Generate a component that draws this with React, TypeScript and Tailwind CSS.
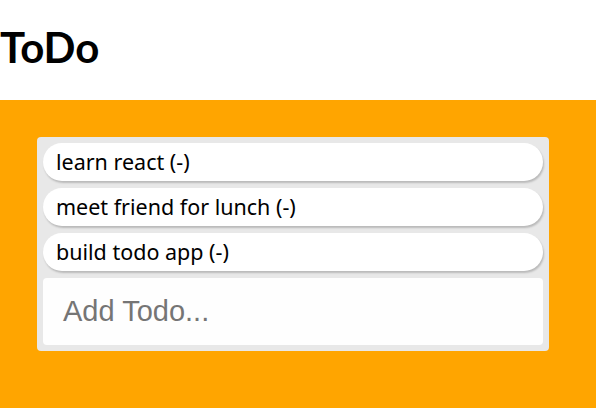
import React from "react";

const todos = ["learn react", "meet friend for lunch", "build todo app"];

export default function App() {
  return (
    <div className="w-[596px] h-[408px] flex flex-col bg-white" style={{ fontFamily: '"Open Sans", "Noto Sans", sans-serif' }}>
      <div className="h-[100px] flex items-center pb-[6px]">
        <h1 className="text-[42px] font-bold leading-none text-black m-0" style={{ fontFamily: 'Lato, sans-serif' }}>ToDo</h1>
      </div>
      <div className="flex-1 bg-[#ffa500] pt-[37px] px-[37px]">
        <div className="w-[512px] bg-[#e8e8e8] rounded-[4px] p-[6px] flex flex-col gap-[7px]">
          {todos.map((t) => (
            <div key={t} className="h-[38px] bg-white rounded-[19px] shadow-[1px_2px_2px_rgba(0,0,0,0.2)] flex items-center pl-[13px] text-[21.5px] text-black" style={{ fontFamily: '"Noto Sans", sans-serif' }}>
              {t} (-)
            </div>
          ))}
          <div className="h-[67px] bg-[#fefefe] rounded-[4px] flex items-center pl-[20px]">
            <span className="text-[29px] text-[#757575]" style={{ fontFamily: '"Liberation Sans", Arial, sans-serif' }}>Add Todo...</span>
          </div>
        </div>
      </div>
    </div>
  );
}
